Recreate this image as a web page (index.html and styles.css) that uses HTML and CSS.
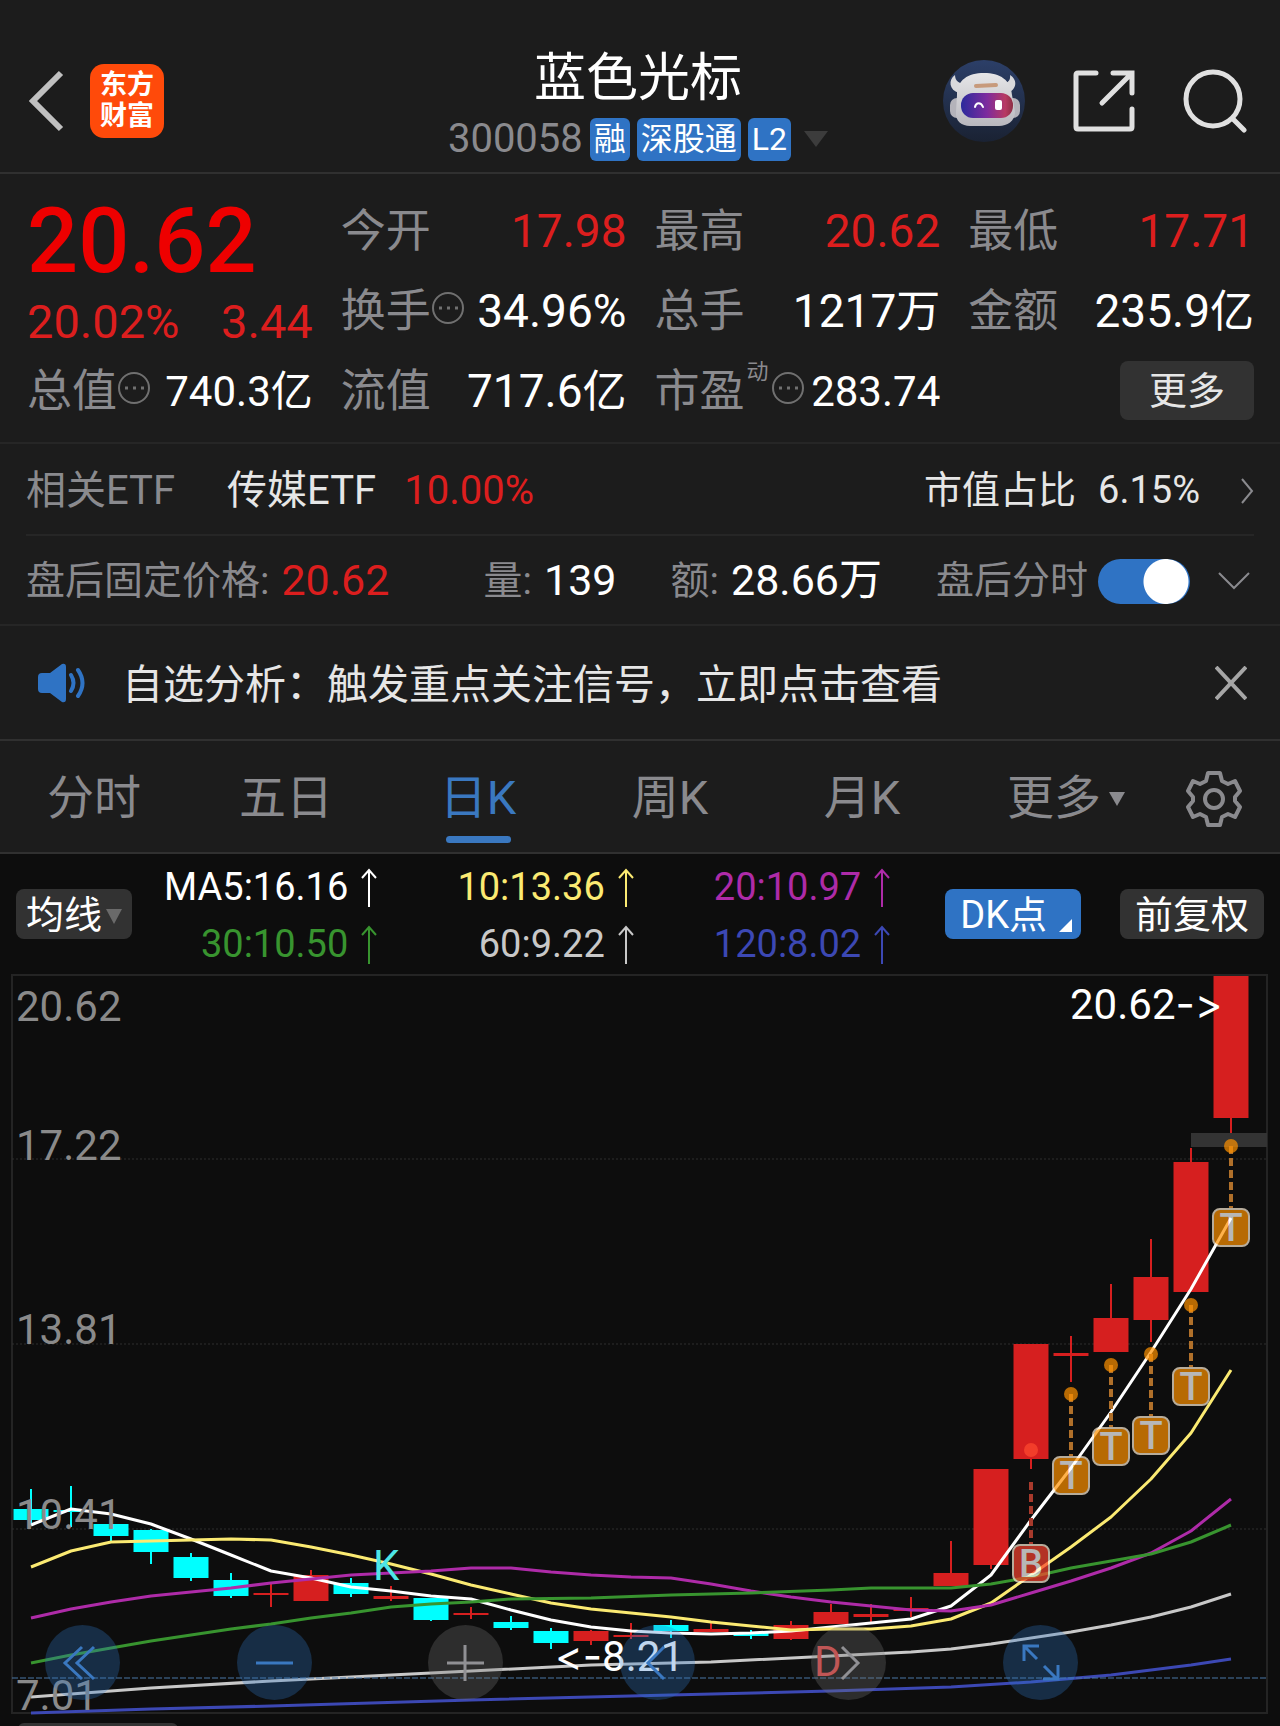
FILE: index.html
```html
<!DOCTYPE html>
<html lang="zh-CN">
<head>
    <meta charset="UTF-8">
    <meta name="viewport" content="width=device-width, initial-scale=1.0">
    <title>蓝色光标 300058</title>
    <link rel="stylesheet" href="styles.css">
</head>
<body>
    <header class="header">
        <div class="header-left">
            <button type="button" class="icon-btn" aria-label="返回">
                <svg width="36" height="62" viewBox="0 0 36 62"><path d="M32 3L4 31L32 59" fill="none" stroke="#c0c0c0" stroke-width="6"/></svg>
            </button>
            <a href="#" class="logo"><span>东方</span><span>财富</span></a>
        </div>
        <div class="header-title">
            <h1>蓝色光标</h1>
            <div class="stock-code">
                <span class="code">300058</span>
                <span class="badge">融</span>
                <span class="badge">深股通</span>
                <span class="badge">L2</span>
                <svg class="code-arrow" width="24" height="16" viewBox="0 0 24 16"><path d="M0 0H24L12 16Z" fill="#3c3c3c"/></svg>
            </div>
        </div>
        <div class="header-right">
            <button type="button" class="icon-btn" aria-label="智能助手">
                <svg width="82" height="82" viewBox="0 0 82 82">
                    <defs>
                        <linearGradient id="sky" x1="0" y1="0" x2="0" y2="1">
                            <stop offset="0" stop-color="#2c3f68"/>
                            <stop offset="1" stop-color="#1a2233"/>
                        </linearGradient>
                        <linearGradient id="visor" x1="0" y1="0" x2="1" y2="0">
                            <stop offset="0" stop-color="#2b2a9c"/>
                            <stop offset="0.5" stop-color="#7d2b9e"/>
                            <stop offset="0.85" stop-color="#b83a63"/>
                            <stop offset="1" stop-color="#8c2f45"/>
                        </linearGradient>
                        <linearGradient id="shell" x1="0" y1="0" x2="0" y2="1">
                            <stop offset="0" stop-color="#e6e6e8"/>
                            <stop offset="1" stop-color="#b9b8be"/>
                        </linearGradient>
                    </defs>
                    <circle cx="41" cy="41" r="41" fill="url(#sky)"/>
                    <path d="M12 15C5 20 6 30 16 33L24 24C16 24 12 21 12 15ZM67 15C75 20 74 30 64 33L56 24C64 24 68 21 67 15Z" fill="#d9d9dc"/>
                    <rect x="7" y="38" width="14" height="20" rx="7" fill="#b4b3ba"/>
                    <rect x="63" y="38" width="14" height="20" rx="7" fill="#b4b3ba"/>
                    <path d="M14 35C14 20 25 13 41 13C57 13 68 20 69 35L72 52C72 61 64 66 56 66H27C19 66 12 61 13 52Z" fill="url(#shell)"/>
                    <rect x="18" y="33" width="52" height="25" rx="12" fill="url(#visor)"/>
                    <path d="M33 26L53 25" stroke="#c79a7c" stroke-width="4" stroke-linecap="round"/>
                    <path d="M32 47C33 42 38 42 40 47" fill="none" stroke="#fff" stroke-width="2" stroke-linecap="round"/>
                    <rect x="52" y="40" width="7" height="10" rx="2" fill="#fff"/>
                </svg>
            </button>
            <button type="button" class="icon-btn" aria-label="分享">
                <svg width="62" height="62" viewBox="0 0 62 62"><path d="M23 3H5Q3 3 3 5V57Q3 59 5 59H57Q59 59 59 57V39M40 3H59V23M58 4L29 33" fill="none" stroke="#e0e0e0" stroke-width="5" stroke-linecap="round"/></svg>
            </button>
            <button type="button" class="icon-btn" aria-label="搜索">
                <svg width="64" height="64" viewBox="0 0 64 64"><circle cx="30" cy="30" r="27" fill="none" stroke="#e0e0e0" stroke-width="5"/><path d="M50 50L61 61" stroke="#e0e0e0" stroke-width="5" stroke-linecap="round"/></svg>
            </button>
        </div>
    </header>

    <section class="quote">
        <div class="price-block">
            <div class="price">20.62</div>
            <div class="change"><span>20.02%</span><span>3.44</span></div>
        </div>
        <div class="item"><span class="label">今开</span><span class="value red">17.98</span></div>
        <div class="item"><span class="label">最高</span><span class="value red">20.62</span></div>
        <div class="item"><span class="label">最低</span><span class="value red">17.71</span></div>
        <div class="item">
            <span class="label">换手</span>
            <svg class="info" viewBox="0 0 34 34"><circle cx="17" cy="17" r="15"/><path d="M8 17h3M16 17h3M24 17h3"/></svg>
            <span class="value">34.96%</span>
        </div>
        <div class="item"><span class="label">总手</span><span class="value">1217<small>万</small></span></div>
        <div class="item"><span class="label">金额</span><span class="value">235.9<small>亿</small></span></div>
        <div class="item">
            <span class="label">总值</span>
            <svg class="info" viewBox="0 0 34 34"><circle cx="17" cy="17" r="15"/><path d="M8 17h3M16 17h3M24 17h3"/></svg>
            <span class="value compact">740.3亿</span>
        </div>
        <div class="item"><span class="label">流值</span><span class="value">717.6<small>亿</small></span></div>
        <div class="item">
            <span class="label">市盈</span><span class="sup">动</span>
            <svg class="info" viewBox="0 0 34 34"><circle cx="17" cy="17" r="15"/><path d="M8 17h3M16 17h3M24 17h3"/></svg>
            <span class="value compact">283.74</span>
        </div>
        <div class="item item-more"><button type="button" class="more-btn">更多</button></div>
    </section>

    <a href="#" class="etf">
        <span class="label">相关ETF</span>
        <span class="etf-name">传媒ETF</span>
        <span class="red">10.00%</span>
        <span class="etf-ratio">市值占比</span>
        <span class="etf-percent">6.15%</span>
        <svg class="etf-arrow" width="14" height="28" viewBox="0 0 14 28"><path d="M2 2L12 14L2 26" fill="none" stroke="#8a8a8e" stroke-width="2"/></svg>
    </a>

    <section class="after-hours">
        <div class="pair"><span class="label">盘后固定价格:</span><span class="num red">20.62</span></div>
        <div class="pair"><span class="label">量:</span><span class="num">139</span></div>
        <div class="pair"><span class="label">额:</span><span class="num">28.66万</span></div>
        <div class="switch-group">
            <label for="afterSwitch" class="label">盘后分时</label>
            <input type="checkbox" id="afterSwitch" class="switch" checked>
            <button type="button" class="icon-btn" aria-label="展开">
                <svg width="32" height="20" viewBox="0 0 32 20"><path d="M1 2L16 17L31 2" fill="none" stroke="#8a8a8e" stroke-width="2"/></svg>
            </button>
        </div>
    </section>

    <section class="notice">
        <svg width="48" height="42" viewBox="0 0 48 42">
            <path d="M4 11H12L24 2Q28 1 28 5V37Q28 41 24 40L12 31H4Q0 31 0 27V15Q0 11 4 11Z" fill="#2f73c4"/>
            <path d="M33 13Q38 21 33 29M40 8Q49 21 40 34" fill="none" stroke="#2f73c4" stroke-width="4" stroke-linecap="round"/>
        </svg>
        <a href="#">自选分析：触发重点关注信号，立即点击查看</a>
        <button type="button" class="icon-btn" aria-label="关闭">
            <svg width="32" height="34" viewBox="0 0 32 34"><path d="M1 1L31 33M31 1L1 33" stroke="#a6a6a6" stroke-width="4"/></svg>
        </button>
    </section>

    <nav class="tabs">
        <button type="button">分时</button>
        <button type="button">五日</button>
        <button type="button" class="active">日K</button>
        <button type="button">周K</button>
        <button type="button">月K</button>
        <button type="button" class="tab-more">更多<svg width="16" height="14" viewBox="0 0 16 14"><path d="M0 0H16L8 14Z" fill="#8a8a8e"/></svg></button>
        <button type="button" aria-label="设置">
            <svg width="56" height="58" viewBox="0 0 56 58">
                <path d="M22 3H34L36 11L42 14L49 11L54 21L49 27V31L54 37L49 47L42 44L36 47L34 55H22L20 47L14 44L7 47L2 37L7 31V27L2 21L7 11L14 14L20 11Z" fill="none" stroke="#8a8a8e" stroke-width="4" stroke-linejoin="round"/>
                <circle cx="28" cy="29" r="9" fill="none" stroke="#8a8a8e" stroke-width="4"/>
            </svg>
        </button>
    </nav>

    <section class="legend">
        <button type="button" class="chip chip-ma">均线<svg width="16" height="15" viewBox="0 0 16 15"><path d="M0 0H16L8 15Z" fill="#6a6a6a"/></svg></button>
        <div class="ma-list">
            <span class="ma ma5">MA5:16.16<svg viewBox="0 0 16 40"><path d="M8 2V39M1 10L8 2L15 10"/></svg></span>
            <span class="ma ma10">10:13.36<svg viewBox="0 0 16 40"><path d="M8 2V39M1 10L8 2L15 10"/></svg></span>
            <span class="ma ma20">20:10.97<svg viewBox="0 0 16 40"><path d="M8 2V39M1 10L8 2L15 10"/></svg></span>
            <span class="ma ma30">30:10.50<svg viewBox="0 0 16 40"><path d="M8 2V39M1 10L8 2L15 10"/></svg></span>
            <span class="ma ma60">60:9.22<svg viewBox="0 0 16 40"><path d="M8 2V39M1 10L8 2L15 10"/></svg></span>
            <span class="ma ma120">120:8.02<svg viewBox="0 0 16 40"><path d="M8 2V39M1 10L8 2L15 10"/></svg></span>
        </div>
        <button type="button" class="chip chip-blue">DK点<svg width="13" height="13" viewBox="0 0 13 13"><path d="M13 0V13H0Z" fill="#fff"/></svg></button>
        <button type="button" class="chip">前复权</button>
    </section>

    <main class="chart">
        <svg class="kline" viewBox="0 974 1280 752">
            <rect class="frame" x="12" y="975" width="1255" height="738"/>
            <path class="grid" d="M12 1159H1267M12 1344H1267M12 1529H1267"/>
            <rect x="1191" y="1133" width="76" height="14" fill="#333"/>

            <!-- candles: thin strokes are the wicks, wide strokes the bodies -->
            <path class="wick down" d="M31 1489V1525M71 1486V1527M111 1514V1541M151 1529V1564M191 1553V1581M231 1573V1598M351 1578V1597M431 1598V1621M511 1616V1630M551 1628V1649M671 1620V1638M751 1630V1639"/>
            <path class="body down" d="M31 1509V1520M71 1510V1512M111 1524V1536M151 1530V1552M191 1557V1578M231 1580V1596M351 1583V1594M431 1598V1620M511 1622V1628M551 1631V1643M671 1625V1631M751 1632V1636"/>
            <path class="wick up" d="M271 1583V1607M311 1570V1601M391 1586V1601M471 1607V1619M591 1630V1645M631 1623V1639M711 1623V1632M791 1621V1640M831 1604V1624M871 1604V1622M911 1597V1617M951 1541V1586M991 1469V1569M1031 1344V1469M1071 1336V1382M1111 1284V1352M1151 1239V1342M1191 1148V1292M1231 976V1133"/>
            <path class="body up" d="M271 1593V1595M311 1575V1601M391 1596V1599M471 1613V1615M591 1631V1641M631 1635V1637M711 1629V1632M791 1625V1639M831 1612V1624M871 1614V1617M911 1608V1611M951 1573V1586M991 1469V1565M1031 1344V1459M1071 1353V1356M1111 1318V1352M1151 1277V1320M1191 1162V1292M1231 976V1118"/>

            <polyline class="line ma120" points="31,1713 151,1709 271,1706 471,1700 671,1695 831,1691 951,1687 1031,1682 1111,1675 1151,1670 1191,1665 1231,1659"/>
            <polyline class="line ma60" points="31,1697 151,1688 271,1681 391,1675 471,1671 591,1665 711,1662 831,1656 911,1652 951,1649 991,1644 1071,1632 1111,1625 1151,1617 1191,1607 1231,1594"/>
            <polyline class="line ma5" points="31,1525 71,1509 111,1514 151,1524 191,1539 231,1555 271,1571 311,1578 351,1587 391,1591 431,1596 471,1599 511,1610 551,1620 591,1627 631,1631 671,1633 711,1634 751,1633 791,1631 831,1627 871,1623 911,1619 951,1606 991,1575 1031,1520 1071,1468 1111,1412 1151,1352 1191,1289 1231,1218"/>
            <polyline class="line ma10" points="31,1567 71,1551 111,1542 151,1541 191,1540 231,1539 271,1540 311,1547 351,1555 391,1564 431,1574 471,1585 511,1594 551,1603 591,1609 631,1613 671,1617 711,1622 751,1626 791,1630 831,1629 871,1629 911,1626 951,1619 991,1603 1031,1575 1071,1547 1111,1517 1151,1479 1191,1433 1231,1370"/>
            <polyline class="line ma20" points="31,1618 71,1609 111,1602 151,1596 191,1592 231,1588 271,1583 311,1579 351,1575 391,1573 431,1571 471,1568 511,1568 551,1572 591,1575 631,1577 671,1578 711,1584 751,1591 791,1597 831,1602 871,1606 911,1610 951,1611 991,1605 1031,1593 1071,1581 1111,1568 1151,1553 1191,1531 1231,1499"/>
            <polyline class="line ma30" points="31,1663 71,1655 111,1648 151,1641 191,1635 231,1629 271,1624 311,1618 351,1613 391,1607 431,1604 471,1602 511,1599 591,1598 671,1595 751,1593 831,1590 871,1588 951,1588 991,1584 1031,1577 1071,1568 1111,1561 1151,1554 1191,1542 1231,1525"/>

            <!-- T / B signals -->
            <g class="signal-line">
                <path d="M1071 1394V1456M1111 1365V1427M1151 1354V1416M1191 1305V1367M1231 1146V1208"/>
                <path class="buy" d="M1031 1482V1544"/>
            </g>
            <g class="signal">
                <circle cx="1071" cy="1394" r="7"/><circle cx="1111" cy="1365" r="7"/><circle cx="1151" cy="1354" r="7"/><circle cx="1191" cy="1305" r="7"/><circle cx="1231" cy="1146" r="7"/>
                <circle cx="1031" cy="1450" r="7" fill="#ff4a30"/>
                <rect x="1053" y="1457" width="36" height="37" rx="7"/><text x="1071" y="1489">T</text>
                <rect x="1093" y="1428" width="36" height="37" rx="7"/><text x="1111" y="1460">T</text>
                <rect x="1133" y="1417" width="36" height="37" rx="7"/><text x="1151" y="1449">T</text>
                <rect x="1173" y="1368" width="36" height="37" rx="7"/><text x="1191" y="1400">T</text>
                <rect x="1213" y="1209" width="36" height="37" rx="7"/><text x="1231" y="1241">T</text>
                <rect class="buy" x="1013" y="1545" width="36" height="37" rx="7"/><text x="1031" y="1577">B</text>
            </g>

            <g class="axis">
                <text x="16" y="1021">20.62</text>
                <text x="16" y="1160">17.22</text>
                <text x="16" y="1344">13.81</text>
                <text x="16" y="1529">10.41</text>
                <text x="16" y="1710">7.01</text>
            </g>
            <text class="mark" x="1070" y="1019">20.62<tspan class="pointer">-&gt;</tspan></text>
            <text class="mark" x="555" y="1671"><tspan class="pointer">&lt;-</tspan>8.21</text>
            <text class="mark k" x="373" y="1580">K</text>
            <text class="mark d" x="814" y="1676">D</text>
            <path class="base" d="M12 1678H1267"/>
            <rect x="18" y="1723" width="160" height="20" rx="6" fill="#333"/>
        </svg>
        <div class="chart-tools">
            <button type="button" aria-label="最左"><svg viewBox="0 0 75 75"><path d="M37 22L20 38L37 54M49 22L32 38L49 54"/></svg></button>
            <button type="button" aria-label="缩小"><svg viewBox="0 0 75 75"><path d="M19 38H56"/></svg></button>
            <button type="button" class="gray" aria-label="放大"><svg viewBox="0 0 75 75"><path d="M19 38H56M37 20V56"/></svg></button>
            <button type="button" aria-label="左移"><svg viewBox="0 0 75 75"><path d="M44 22L28 38L44 54"/></svg></button>
            <button type="button" class="gray" aria-label="右移"><svg viewBox="0 0 75 75"><path d="M31 22L47 38L31 54"/></svg></button>
            <button type="button" aria-label="全屏"><svg viewBox="0 0 75 75"><path d="M21 36V21H36M21 21L34 34M55 40V54H40M54 54L41 41"/></svg></button>
        </div>
    </main>
</body>
</html>
```
FILE: styles.css
```css
* {
    box-sizing: border-box;
}

body {
    margin: 0;
    background-color: #0d0d0d;
    color: #e6e6e6;
    font-family: Roboto, "Noto Sans CJK SC", sans-serif;
    font-size: 38px;
    line-height: 1.2;
    overflow-x: hidden;
}

button {
    padding: 0;
    border: none;
    background: none;
    color: inherit;
    font: inherit;
    cursor: pointer;
}

a {
    color: inherit;
    text-decoration: none;
}

svg {
    display: block;
    flex: none;
}

.red {
    color: #dc1e1e;
}

.label {
    color: #8a8a8e;
}

.icon-btn {
    display: flex;
}

/* header */
.header {
    display: grid;
    grid-template-columns: 1fr auto 1fr;
    align-items: center;
    height: 174px;
    padding: 30px 33px 0 29px;
    background-color: #1c1c1c;
    border-bottom: 2px solid #303030;
}

.header-left {
    display: flex;
    align-items: center;
    gap: 25px;
}

.logo {
    display: flex;
    flex-direction: column;
    align-items: center;
    justify-content: center;
    width: 74px;
    height: 74px;
    border-radius: 14px;
    background-color: #ff4a0a;
    color: #fff;
    font-size: 27px;
    font-weight: 700;
    line-height: 31px;
}

.header-title {
    display: flex;
    flex-direction: column;
    align-items: center;
    gap: 3px;
    padding-top: 7px;
}

.header-title h1 {
    margin: 0;
    color: #fff;
    font-size: 52px;
    font-weight: 400;
    line-height: 66px;
}

.stock-code {
    display: flex;
    align-items: center;
    gap: 7px;
}

.code {
    color: #8a8a8e;
    font-size: 40px;
}

.badge {
    padding: 0 4px;
    border-radius: 6px;
    background-color: #2f73c4;
    color: #fff;
    font-size: 32px;
    line-height: 43px;
}

.code-arrow {
    margin-left: 6px;
}

.header-right {
    display: flex;
    align-items: center;
    justify-content: flex-end;
    gap: 48px;
}

/* quote */
.quote {
    display: grid;
    grid-template-columns: repeat(4, 1fr);
    grid-auto-rows: 80px;
    column-gap: 28px;
    padding: 16px 26px 12px 27px;
    background-color: #1c1c1c;
    border-bottom: 2px solid #262626;
}

.price-block {
    grid-row: span 2;
    color: #dc1e1e;
}

.price {
    color: #ee0000;
    font-size: 90px;
    font-weight: 500;
    line-height: 104px;
}

.change {
    display: flex;
    justify-content: space-between;
    font-size: 47px;
    line-height: 56px;
}

.item {
    display: flex;
    align-items: center;
    padding-top: 4px;
    white-space: nowrap;
}

.item .label {
    font-size: 45px;
}

.item .value {
    margin-left: auto;
    font-size: 46px;
}

.item .value:not(.red) {
    color: #fff;
}

.item .value small {
    font-size: 44px;
}

.item .compact {
    font-size: 42px;
}

.info {
    width: 34px;
    height: 34px;
    margin-bottom: 8px;
    fill: none;
    stroke: #707070;
    stroke-width: 2;
}

.info path {
    stroke-width: 3;
}

.sup {
    align-self: flex-start;
    padding: 0 2px;
    color: #8a8a8e;
    font-size: 22px;
    line-height: 36px;
}

.item-more {
    justify-content: flex-end;
    padding-top: 0;
}

.more-btn {
    width: 134px;
    height: 59px;
    padding-top: 4px;
    border-radius: 8px;
    background-color: #323232;
}

/* related ETF */
.etf {
    display: flex;
    align-items: center;
    height: 90px;
    padding: 4px 26px 0;
    background-color: #1c1c1c;
    font-size: 40px;
}

.etf-name {
    margin: 0 28px 0 52px;
}

.etf-ratio {
    margin-left: auto;
    margin-right: 22px;
    font-size: 38px;
}

.etf-percent {
    font-size: 38px;
}

.etf-arrow {
    margin-left: 40px;
}

/* after hours */
.after-hours {
    display: flex;
    align-items: center;
    gap: 54px;
    height: 92px;
    padding: 4px 30px 0 26px;
    background: linear-gradient(#262626, #262626) center top / calc(100% - 52px) 2px no-repeat #1c1c1c;
    border-bottom: 2px solid #262626;
}

.pair {
    display: flex;
    align-items: center;
    gap: 12px;
    font-size: 39px;
}

.pair:first-child {
    margin-right: auto;
}

.num {
    font-size: 43px;
}

.num:not(.red) {
    color: #fff;
}

.switch-group {
    display: flex;
    align-items: center;
    gap: 10px;
}

.switch-group .icon-btn {
    margin-left: 18px;
}

.switch {
    appearance: none;
    width: 92px;
    height: 45px;
    margin: 0;
    border-radius: 23px;
    background: radial-gradient(circle at 68px 50%, #fff 22px, transparent 23px) #2f73c4;
    cursor: pointer;
}

.switch:not(:checked) {
    background: radial-gradient(circle at 23px 50%, #fff 22px, transparent 23px) #555;
}

/* notice */
.notice {
    display: flex;
    align-items: center;
    height: 115px;
    padding: 0 33px 0 38px;
    background-color: #1c1c1c;
    border-bottom: 2px solid #303030;
}

.notice a {
    flex: 1;
    margin-left: 36px;
    padding-top: 6px;
    font-size: 41px;
}

/* tabs */
.tabs {
    display: grid;
    grid-template-columns: repeat(6, 3fr) 2fr;
    height: 113px;
    background-color: #1c1c1c;
    border-bottom: 2px solid #303030;
    color: #8a8a8e;
    font-size: 47px;
}

.tabs button {
    position: relative;
    display: flex;
    align-items: center;
    justify-content: center;
    gap: 8px;
    padding: 4px 4px 0 0;
}

.tabs .active {
    color: #3a78c0;
}

.tabs .active::after {
    content: "";
    position: absolute;
    bottom: 9px;
    width: 65px;
    height: 7px;
    border-radius: 4px;
    background-color: #3a78c0;
}

.tab-more svg {
    margin-right: -24px;
}

/* moving averages */
.legend {
    display: flex;
    align-items: center;
    height: 120px;
    padding: 0 16px;
}

.chip {
    display: flex;
    align-items: center;
    height: 50px;
    padding: 4px 15px 0;
    border-radius: 8px;
    background-color: #323232;
    color: #fff;
}

.chip-ma {
    gap: 4px;
    padding: 4px 10px 0;
}

.chip-blue {
    gap: 12px;
    margin: 0 39px 0 55px;
    padding: 4px 9px 0 15px;
    background-color: #2f73c4;
}

.chip-blue svg {
    align-self: flex-end;
    margin-bottom: 7px;
}

.ma-list {
    flex: 1;
    display: grid;
    grid-template-columns: 22fr 23fr 23fr;
    padding-top: 4px;
    line-height: 57px;
}

.ma {
    display: flex;
    align-items: center;
    justify-content: flex-end;
    gap: 13px;
}

.ma svg {
    width: 16px;
    height: 40px;
    fill: none;
    stroke: currentColor;
    stroke-width: 2;
}

.ma5 { color: #fff; }
.ma10 { color: #fbea72; }
.ma20 { color: #ae2ba8; }
.ma30 { color: #38942f; }
.ma60 { color: #c8c8c8; }
.ma120 { color: #3c48b4; }

/* chart */
.chart {
    position: relative;
}

.kline {
    width: 100%;
    font-size: 42px;
}

.frame {
    fill: none;
    stroke: #242424;
    stroke-width: 2;
}

.grid {
    stroke: #2e2e2e;
    stroke-dasharray: 2 2;
}

.base {
    stroke: #4a78a8;
    stroke-width: 1;
    stroke-dasharray: 6 2;
}

.wick {
    stroke-width: 2;
}

.body {
    stroke-width: 35;
}

.up { stroke: #d61f1f; }
.down { stroke: #0ff; }

.line {
    fill: none;
    stroke: currentColor;
    stroke-width: 3;
    stroke-linejoin: round;
}

.signal-line {
    stroke: #b0702a;
    stroke-width: 4;
    stroke-dasharray: 8 4;
}

.signal-line .buy {
    stroke: #a83a2c;
}

.signal {
    fill: #ff9200;
    opacity: 0.7;
}

.signal rect {
    stroke: #fff0d8;
    stroke-width: 2;
}

.signal .buy {
    fill: #fa432e;
}

.signal text {
    fill: #fff;
    font-size: 38px;
    font-weight: 500;
    text-anchor: middle;
}

.axis {
    fill: #8a8a8a;
}

.mark {
    fill: #fff;
}

.pointer {
    font-family: Inter, sans-serif;
    font-feature-settings: "calt" 0;
}

.k { fill: #4de6e6; }
.d { fill: #e04848; }

.chart-tools {
    position: absolute;
    left: 45px;
    right: 202px;
    bottom: 26px;
    display: flex;
    justify-content: space-between;
}

.chart-tools button {
    width: 75px;
    height: 75px;
    border-radius: 50%;
    background-color: rgba(48, 120, 200, 0.3);
    color: #3a78c0;
}

.chart-tools .gray {
    background-color: rgba(120, 120, 120, 0.3);
    color: #909094;
}

.chart-tools svg {
    fill: none;
    stroke: currentColor;
    stroke-width: 3;
}
```
